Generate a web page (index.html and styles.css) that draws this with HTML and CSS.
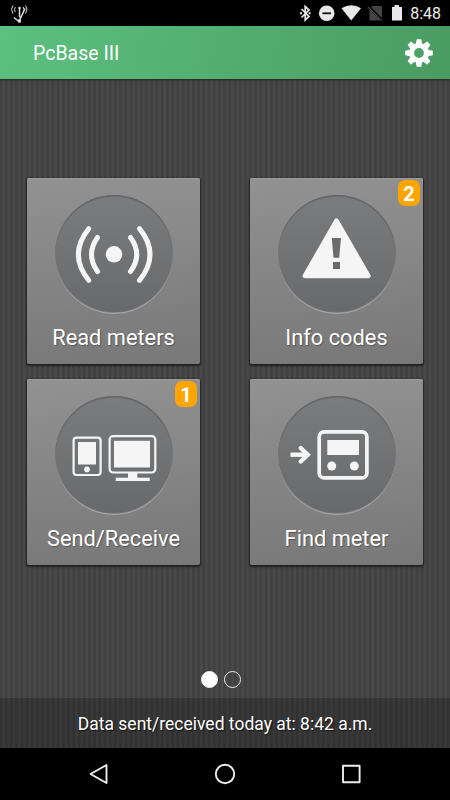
FILE: index.html
```
<!DOCTYPE html>
<html lang="en">
<head>
  <meta charset="utf-8">
  <title>PcBase III</title>
  <link rel="stylesheet" href="styles.css">
</head>
<body>
  <div class="status-bar">
    <svg class="antenna" width="20" height="21" viewBox="0 0 20 21" fill="none" stroke="#ddd" stroke-width="1">
      <path d="M10.500 4.500v10M5 14.500l5 4 6-13" stroke-width="1.500"/>
      <path d="M4 2.500q-3 3.500 0 8M6.300 4q-1.800 2.500 0 5M16.500 2.500q3 3.500 0 8M14.200 4q1.800 2.500 0 5"/>
      <circle cx="10.500" cy="5" r="1.200" fill="#ddd" stroke="none"/>
      <path d="M9 16.500h3v3H9z" fill="#ddd" stroke="none"/>
    </svg>
    <svg class="status-icons" width="110" height="20" viewBox="0 0 110 20" fill="#e8e8e8">
      <path d="M2.500 6l7.500 7.500-3.800 3.500V3.500L10 7l-7.500 7.500" fill="none" stroke="#e8e8e8" stroke-width="1.700"/>
      <path d="M1 9.300h2v2H1zM9.700 9.300h2v2h-2z"/>
      <circle cx="27.700" cy="10.300" r="7.800"/>
      <path d="M23.500 9.400h8.500v1.800h-8.500z" fill="#111"/>
      <path d="M42.500 5.200q9.800-5.700 19.500 0L52.200 17.500z"/>
      <path d="M73.500 3H83v14.500H70.500V6z" fill="#444"/>
      <path d="M69.500 3.500L83.500 17.500" stroke="#000" stroke-width="2.800"/>
      <path d="M69 4L82.500 17.500" stroke="#484848" stroke-width="1.300"/>
      <path d="M93 4h2.500V2h4.500v2h3v13.500H93z"/>
    </svg>
    <span class="clock">8:48</span>
  </div>

  <div class="title-bar">
    <h1>PcBase III</h1>
    <svg class="gear" width="28" height="28" viewBox="0 0 28 28">
      <g fill="#fff">
        <circle cx="14" cy="14" r="10"/>
        <path id="tooth" d="M11.700.2h4.600l.9 5h-6.400zM11.700 27.800h4.600l.9-5h-6.400zM.2 11.700v4.600l5 .9v-6.400zM27.800 11.700v4.600l-5 .9v-6.400z"/>
        <use href="#tooth" transform="rotate(45 14 14)"/>
      </g>
      <circle cx="14" cy="14" r="4.900" fill="#4da268"/>
    </svg>
  </div>

  <div class="content">
    <div class="tiles">
      <div class="tile">
        <div class="circle">
          <svg width="118" height="119" viewBox="0 0 118 119" fill="none" stroke="#f5f5f5" stroke-width="5" stroke-linecap="round">
            <circle cx="59" cy="59.300" r="8.300" fill="#f5f5f5" stroke="none"/>
            <path d="M33.700 33.700Q13 59.500 33.700 85.300M42.500 42.500Q30.500 59.500 42.500 76.500"/>
            <path d="M84.500 33.700Q105.500 59.500 84.500 85.300M75.500 42.500Q88 59.500 75.500 76.500"/>
          </svg>
        </div>
        <div class="label">Read meters</div>
      </div>

      <div class="tile">
        <div class="circle">
          <svg width="118" height="119" viewBox="0 0 118 119">
            <path d="M58.500 25.700L90.400 80.900H26.800z" fill="#f5f5f5" stroke="#f5f5f5" stroke-width="4.500" stroke-linejoin="round"/>
            <path d="M53.700 43H63l-1.800 19.700h-5.700zM55 67h7v7h-7z" fill="#6a6b6d"/>
          </svg>
        </div>
        <div class="label">Info codes</div>
        <span class="badge">2</span>
      </div>

      <div class="tile">
        <div class="circle">
          <svg width="118" height="119" viewBox="0 0 118 119" fill="#f5f5f5">
            <g fill="none" stroke="#f5f5f5" stroke-width="2.200">
              <rect x="18.600" y="41.700" width="27" height="37.300" rx="3"/>
              <rect x="54.600" y="40.200" width="45.700" height="36.300" rx="3.500"/>
            </g>
            <rect x="23" y="46" width="18" height="22.500"/>
            <circle cx="32" cy="73.400" r="2.800"/>
            <rect x="59" y="44.800" width="36" height="26.700"/>
            <rect x="73" y="76" width="9.300" height="6"/>
            <rect x="60.700" y="81.700" width="34" height="3.300"/>
          </svg>
        </div>
        <div class="label">Send/Receive</div>
        <span class="badge">1</span>
      </div>

      <div class="tile">
        <div class="circle">
          <svg width="118" height="119" viewBox="0 0 118 119" fill="#f5f5f5">
            <rect x="41.200" y="35.900" width="47.700" height="46" rx="5" fill="none" stroke="#f5f5f5" stroke-width="3.700"/>
            <rect x="49.300" y="44" width="31.700" height="15"/>
            <circle cx="53.700" cy="70" r="4.500"/>
            <circle cx="76.300" cy="70" r="4.500"/>
            <path d="M12.500 58.700h17" fill="none" stroke="#f5f5f5" stroke-width="4.400"/>
            <path d="M22.700 52l7 6.700-7 6.800" fill="none" stroke="#f5f5f5" stroke-width="4.400" stroke-linecap="round"/>
          </svg>
        </div>
        <div class="label">Find meter</div>
      </div>
    </div>

    <div class="pager">
      <span class="dot active"></span>
      <span class="dot"></span>
    </div>
  </div>

  <div class="info-bar">Data sent/received today at: 8:42 a.m.</div>

  <div class="nav-bar">
    <svg width="20" height="22" viewBox="0 0 20 22"><path d="M1.500 11L17.500 2v18z"/></svg>
    <svg width="22" height="22" viewBox="0 0 22 22"><circle cx="11" cy="11" r="9.200"/></svg>
    <svg width="20" height="20" viewBox="0 0 20 20"><rect x="2" y="1.800" width="16.600" height="16.400"/></svg>
  </div>
</body>
</html>
```
FILE: styles.css
```
* {
  box-sizing: border-box;
}

body {
  margin: 0;
  width: 450px;
  height: 800px;
  display: flex;
  flex-direction: column;
  overflow: hidden;
  font-family: Roboto, sans-serif;
  color: #fff;
  background: repeating-linear-gradient(90deg, #404040 0, #404040 1.8px, #4a4a4a 3px, #4a4a4a 4.4px, #404040 5.2px);
}

.status-bar {
  height: 26px;
  padding: 3px 9px 0 9px;
  display: flex;
  background: #000;
}

.status-icons {
  margin-left: auto;
}

.clock {
  width: 32px;
  font-size: 16px;
  line-height: 21px;
  color: #eee;
  text-align: right;
  white-space: nowrap;
}

.title-bar {
  height: 53px;
  padding: 0 17px 0 33px;
  display: flex;
  align-items: center;
  justify-content: space-between;
  background: linear-gradient(100deg, #5bc080, #4a9b62);
  box-shadow: 0 1px 2px #222;
}

.title-bar h1 {
  margin: 0;
  padding-top: 1px;
  font-size: 19.5px;
  font-weight: 400;
}

.content {
  flex: 1;
  display: flex;
  flex-direction: column;
  align-items: center;
  padding-top: 99px;
}

.tiles {
  display: grid;
  grid-template-columns: 173px 173px;
  grid-template-rows: 186px 186px;
  gap: 15px 50px;
}

.tile {
  position: relative;
  display: flex;
  flex-direction: column;
  align-items: center;
  padding-top: 17px;
  border-radius: 2px;
  background: linear-gradient(175deg, #929292, #787878);
  box-shadow: inset 0 1px 0 #9c9c9c, 0 1px 2px 1px #202020;
}

.circle {
  width: 118px;
  height: 119px;
  border-radius: 50%;
  background: linear-gradient(#7b7c7e, #68696b);
  box-shadow: inset 0 1.5px 1px #626365, inset 0 -1.5px 1px #a6a6a9;
}

.circle svg {
  display: block;
}

.label {
  margin-top: 10px;
  font-size: 21.8px;
  line-height: 28px;
  text-shadow: 1px 1px 1px #555;
}

/* notification count in the tile corner */
.badge {
  position: absolute;
  top: 2px;
  right: 3px;
  width: 22px;
  height: 26px;
  border-radius: 7px;
  background: #ffa500;
  font-size: 20px;
  font-weight: 700;
  line-height: 28px;
  text-align: center;
}

.pager {
  display: flex;
  gap: 6px;
  margin: 106px 0 0 -8px;
}

.dot {
  width: 17px;
  height: 17px;
  border: 1px solid #eee;
  border-radius: 50%;
}

.dot.active {
  background: #fff;
}

.info-bar {
  height: 50px;
  line-height: 52px;
  font-size: 17.5px;
  text-align: center;
  text-shadow: 1px 1px 1px #111;
  background: rgba(0, 0, 0, 0.22);
}

.nav-bar {
  height: 52px;
  padding: 0 89px;
  display: flex;
  align-items: center;
  justify-content: space-between;
  background: #000;
}

.nav-bar svg {
  fill: none;
  stroke: #eee;
  stroke-width: 1.9;
  stroke-linejoin: round;
}
```
